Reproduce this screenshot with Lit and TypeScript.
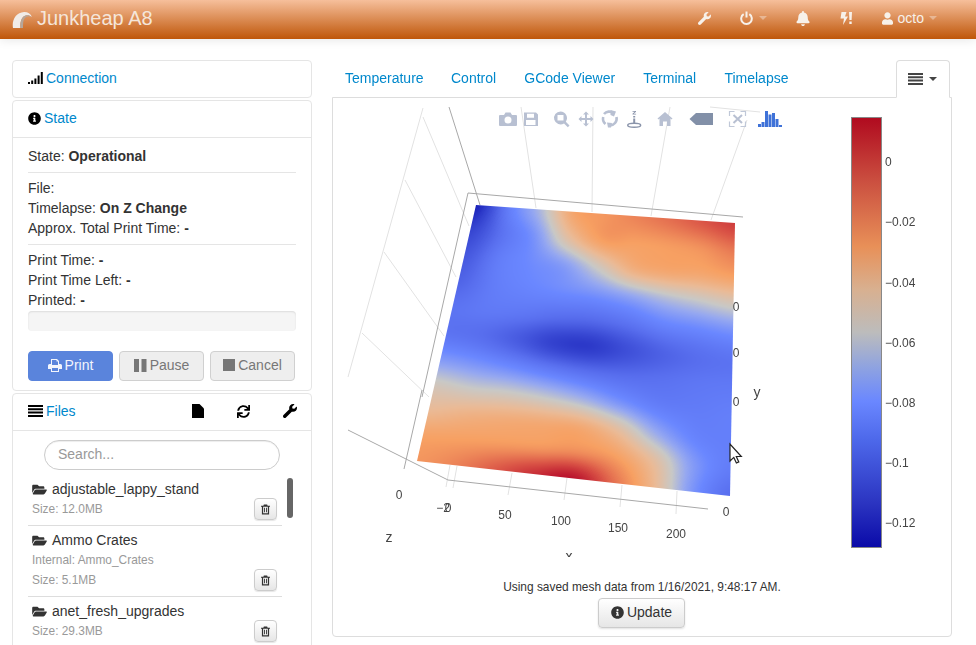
import { LitElement, html, css, svg } from "lit";
import { customElement } from "lit/decorators.js";

const WRENCH = "M507.73 109.1c-2.24-9.03-13.54-12.09-20.12-5.51l-74.36 74.36-67.88-11.31-11.31-67.88 74.36-74.36c6.62-6.62 3.43-17.9-5.66-20.16-47.38-11.74-99.55.91-136.58 37.93-39.64 39.64-50.55 97.1-34.05 147.2L18.74 402.76c-24.99 24.99-24.99 65.51 0 90.5 24.99 24.99 65.51 24.99 90.5 0l213.21-213.21c50.12 16.71 107.47 5.68 147.37-34.22 37.07-37.07 49.7-89.32 37.91-136.73z";
const INFO = "M256 8C119.043 8 8 119.083 8 256c0 136.997 111.043 248 248 248s248-111.003 248-248C504 119.083 392.957 8 256 8zm0 110c23.196 0 42 18.804 42 42s-18.804 42-42 42-42-18.804-42-42 18.804-42 42-42zm56 254c0 6.627-5.373 12-12 12h-88c-6.627 0-12-5.373-12-12v-24c0-6.627 5.373-12 12-12h12v-64h-12c-6.627 0-12-5.373-12-12v-24c0-6.627 5.373-12 12-12h64c6.627 0 12 5.373 12 12v100h12c6.627 0 12 5.373 12 12v24z";
const BELL = "M224 512c35.32 0 63.97-28.65 63.97-64H160.03c0 35.35 28.65 64 63.97 64zm215.39-149.71c-19.32-20.76-55.47-51.99-55.47-154.29 0-77.7-54.48-139.9-127.94-155.16V32c0-17.67-14.32-32-31.98-32s-31.98 14.33-31.98 32v20.84C118.56 68.1 64.08 130.3 64.08 208c0 102.3-36.15 133.53-55.47 154.29-6 6.45-8.66 14.16-8.61 21.71.11 16.4 12.98 32 32.1 32h383.8c19.12 0 32-15.6 32.1-32 .05-7.55-2.61-15.27-8.61-21.71z";
const USER = "M224 256c70.7 0 128-57.3 128-128S294.7 0 224 0 96 57.3 96 128s57.3 128 128 128zm89.6 32h-16.7c-22.2 10.2-46.9 16-72.9 16s-50.6-5.8-72.9-16h-16.7C60.2 288 0 348.2 0 422.4V464c0 26.5 21.5 48 48 48h352c26.5 0 48-21.5 48-48v-41.6c0-74.2-60.2-134.4-134.4-134.4z";
const SYNC = "M440.65 12.57l4 82.77A247.16 247.16 0 0 0 255.83 8C134.73 8 33.91 94.92 12.29 209.82A12 12 0 0 0 24.09 224h49.05a12 12 0 0 0 11.67-9.26 175.91 175.91 0 0 1 317-56.94l-101.46-4.86a12 12 0 0 0-12.57 12v47.41a12 12 0 0 0 12 12H500a12 12 0 0 0 12-12V12a12 12 0 0 0-12-12h-47.37a12 12 0 0 0-11.98 12.57zM255.83 432a175.61 175.61 0 0 1-146-77.8l101.8 4.87a12 12 0 0 0 12.57-12v-47.4a12 12 0 0 0-12-12H12a12 12 0 0 0-12 12V500a12 12 0 0 0 12 12h47.35a12 12 0 0 0 12-12.6l-4.15-82.57A247.17 247.17 0 0 0 255.83 504c121.11 0 221.93-86.92 243.55-201.82a12 12 0 0 0-11.8-14.18h-49.05a12 12 0 0 0-11.67 9.26A175.86 175.86 0 0 1 255.83 432z";
const FOLDER = "M572.694 292.093L500.27 416.248A63.997 63.997 0 0 1 444.989 448H45.025c-18.523 0-30.064-20.093-20.731-36.093l72.424-124.155A64 64 0 0 1 152 256h399.964c18.523 0 30.064 20.093 20.73 36.093zM152 224h328v-48c0-26.51-21.49-48-48-48H272l-64-64H48C21.49 64 0 85.49 0 112v278.046l69.077-118.418C86.214 242.25 117.989 224 152 224z";

const ic = (vb: string, d: string, w: number, h: number) =>
  html`<svg class="ic" viewBox=${vb} width=${w} height=${h} fill="currentColor"><path d=${d}></path></svg>`;

const wrench = (s = 13) => ic("0 0 512 512", WRENCH, s, s);
const info = (s = 13) => ic("0 0 512 512", INFO, s, s);
const listIcon = () => html`<svg class="ic" viewBox="0 0 15 12" width="15" height="12" fill="currentColor"><path d="M0 0h15v2H0zM0 3.3h15v2H0zM0 6.6h15v2H0zM0 9.9h15v2H0z"></path></svg>`;
const folder = () => ic("0 0 576 512", FOLDER, 15, 13);
const trash = () => html`<svg class="ic" viewBox="0 0 10 11" width="9" height="11" fill="currentColor"><path fill-rule="evenodd" d="M3.2 0h3.6l.6 1.4H10v1H9V11H1V2.400H0v-1h2.600zM2.400 2.400v7.300h5.200V2.400zM3.400 3.600h1v5h-1zM5.600 3.600h1v5h-1z"></path></svg>`;
const caret = () => html`<span class="caret"></span>`;

const KNOTS: number[][] = [
  [.03, .30, .46, .68, .72, .76, .80, .85, .90],
  [.12, .27, .38, .58, .70, .70, .71, .73, .78],
  [.18, .30, .35, .40, .52, .64, .67, .67, .69],
  [.22, .30, .33, .35, .37, .41, .46, .49, .52],
  [.27, .29, .28, .25, .24, .27, .32, .34, .36],
  [.27, .25, .19, .11, .09, .15, .21, .25, .27],
  [.38, .36, .33, .29, .26, .25, .26, .28, .29],
  [.52, .50, .50, .48, .44, .37, .31, .30, .31],
  [.60, .63, .65, .66, .66, .58, .43, .33, .31],
  [.69, .70, .71, .72, .74, .70, .58, .39, .30],
  [.72, .76, .84, .93, .99, .80, .62, .38, .25],
];

const SURFACE_STOPS: [number, number[]][] = [
  [0, [16, 20, 178]], [.1, [48, 62, 204]], [.25, [88, 110, 238]], [.34, [106, 135, 255]],
  [.42, [150, 168, 240]], [.5, [200, 200, 198]], [.6, [234, 186, 150]], [.7, [247, 160, 98]],
  [.85, [218, 84, 70]], [1, [184, 16, 44]],
];

function cr(a: number, b: number, c: number, d: number, t: number) {
  return .5 * (2 * b + (c - a) * t + (2 * a - 5 * b + 4 * c - d) * t * t + (3 * b - a - 3 * c + d) * t * t * t);
}

function field(u: number, v: number) {
  const R = KNOTS.length - 1, C = KNOTS[0].length - 1;
  const x = Math.min(Math.max(u, 0), 1) * C, y = Math.min(Math.max(v, 0), 1) * R;
  const i = Math.min(Math.floor(x), C - 1), j = Math.min(Math.floor(y), R - 1);
  const g = (r: number, c: number) => KNOTS[Math.min(Math.max(r, 0), R)][Math.min(Math.max(c, 0), C)];
  const row = (r: number) => cr(g(r, i - 1), g(r, i), g(r, i + 1), g(r, i + 2), x - i);
  return cr(row(j - 1), row(j), row(j + 1), row(j + 2), y - j);
}

function colour(t: number) {
  const s = SURFACE_STOPS;
  const x = Math.min(Math.max(t, 0), 1);
  for (let k = 1; k < s.length; k++) {
    if (x <= s[k][0]) {
      const f = (x - s[k - 1][0]) / (s[k][0] - s[k - 1][0]);
      return s[k][1].map((c, n) => s[k - 1][1][n] + (c - s[k - 1][1][n]) * f);
    }
  }
  return s[s.length - 1][1];
}

// Corners of the surface, in page pixels, minus the plot origin.
const OX = 333, OY = 98, PW = 618, PH = 459;
const TL = [476 - OX, 205 - OY], TR = [735 - OX, 223 - OY], BR = [730 - OX, 496 - OY], BL = [417 - OX, 461 - OY];

const GRID: number[][] = [
  [521, 107, 536, 208], [593, 107, 592, 212], [670, 107, 651, 216], [747, 120, 711, 220], [710, 107, 760, 112],
  [423, 108, 348, 377], [423, 117, 469, 226], [405, 180, 456, 277], [384, 252, 444, 336], [362, 333, 429, 397],
  [450, 465, 446, 487], [457, 466, 453, 488], [512, 473, 508, 495], [567, 478, 564, 500], [622, 485, 620, 507], [677, 491, 676, 514],
];
const AXES: number[][] = [
  [449, 107, 480, 205], [468, 193, 743, 217], [468, 193, 422, 397], [422, 390, 404, 469], [448, 480, 708, 509], [348, 430, 448, 480],
];
const LABELS: [number, number, string][] = [
  [399, 499, "0"], [443, 512, "−2"], [448, 512, "0"], [505, 519, "50"], [561, 525, "100"], [618, 532, "150"], [676, 538, "200"], [726, 516, "0"],
  [736, 311, "0"], [736, 357, "0"], [736, 406, "0"],
];
const TITLES: [number, number, string][] = [[757, 397, "y"], [389, 542, "z"], [569, 561, "x"]];
const BAR: [number, string][] = [
  [166, "0"], [226, "−0.02"], [287, "−0.04"], [347, "−0.06"], [407, "−0.08"], [467, "−0.1"], [527, "−0.12"],
];
const STOPS: [number, string][] = [
  [0, "#0a0aa8"], [.1, "#2a33c0"], [.25, "#4d68ea"], [.34, "#6a87ff"], [.42, "#8fa3e0"], [.5, "#bcbcbc"],
  [.6, "#d8b090"], [.7, "#e89058"], [.85, "#cb5040"], [1, "#b00a1f"],
];
const LOGO_BARS: number[][] = [[758, 124], [761.5, 122], [765, 111], [768.5, 114.5], [772, 113], [775.5, 119], [779, 125]];

@customElement("app-root")
export class AppRoot extends LitElement {
  static styles = css`
    :host { display: block; height: 645px; overflow: hidden; font: 14px/20px "Liberation Sans", Arial, sans-serif; color: #333; background: #fff; }
    * { box-sizing: border-box; }
    svg { display: block; }
    .ic { display: inline-block; flex: none; }
    a { color: #0088cc; text-decoration: none; }

    .nav { height: 39px; display: flex; align-items: center; padding: 0 39px 0 12px; position: relative; z-index: 2;
      background: linear-gradient(#f6bf9b, #bf5609); box-shadow: 0 1px 10px rgba(0,0,0,.1); color: #f7f1ea; }
    .brand { display: flex; align-items: center; font-size: 20px; color: #f5e6da; margin-top: -3px; }
    .brand svg { margin-right: 5px; margin-top: 3px; }
    .nav-right { margin-left: auto; display: flex; align-items: center; margin-top: -3px; }
    .ni { display: flex; align-items: center; }
    .ni-wrench { margin-right: 29px; }
    .ni-power { margin-right: 29px; }
    .ni-bell { margin-right: 30px; }
    .ni-bolt { margin-right: 30px; }
    .caret { display: inline-block; width: 0; height: 0; border: 4px solid transparent; border-top-color: currentColor; border-bottom: 0; }
    .nav .caret { opacity: .4; margin-left: 6px; }
    .octo { margin-left: 5px; }
    .ni-user .caret { margin-left: 5px; }

    .main { display: flex; padding: 21px 24px 0 12px; gap: 20px; }
    .left { width: 300px; flex: none; display: flex; flex-direction: column; gap: 2px; }
    .panel { border: 1px solid #e5e5e5; border-radius: 4px; background: #fff; }
    .head { height: 36px; padding: 7px 15px 9px; display: flex; align-items: center; gap: 3px; }
    .head .ic { color: #000; }
    .bordered { border-bottom: 1px solid #e5e5e5; height: 37px; }
    .state { padding: 8px 15px 8px; height: 252px; }
    .hr { height: 1px; background: #e5e5e5; margin: 6px 0 5px; }
    .progress { height: 20px; margin-top: 1px; border-radius: 4px; background: #f5f5f5; box-shadow: inset 0 1px 2px rgba(0,0,0,.1); }
    .btns { display: flex; gap: 6px; margin-top: 20px; }
    .btn { width: 85px; height: 30px; padding-bottom: 2px; display: flex; align-items: center; justify-content: center; gap: 3px; border-radius: 4px;
      border: 1px solid #d0d0d0; background: #eee; color: #777; }
    .btn.primary { background: #5a84dc; border-color: #5a84dc; color: #f2f5fc; }
    .files-head { justify-content: flex-start; }
    .tools { margin-left: auto; display: flex; align-items: center; gap: 33px; margin-right: -1px; }
    .files-body { position: relative; height: 300px; padding: 9px 15px 0; overflow: hidden; }
    .search { display: block; width: 236px; height: 30px; margin-left: 16px; border: 1px solid #ccc; border-radius: 15px; padding: 0 13px;
      line-height: 26px; color: #999; box-shadow: inset 0 1px 1px rgba(0,0,0,.075); }
    .list { margin-top: 5px; width: 254px; }
    .item { padding: 4px 5px 6px 4px; border-bottom: 1px solid #ddd; }
    .name { display: flex; align-items: center; gap: 5px; color: #333; }
    .name .ic { color: #333; }
    .meta { font-size: 11.9px; color: #999; }
    .row { display: flex; justify-content: space-between; align-items: center; }
    .del { width: 23px; height: 22px; margin: -1px 0; border: 1px solid #ccc; border-radius: 4px; background: linear-gradient(#fff, #e6e6e6);
      display: flex; align-items: center; justify-content: center; color: #333; box-shadow: 0 1px 1px rgba(0,0,0,.1); }
    .thumb { position: absolute; left: 274px; top: 47px; width: 6px; height: 40px; border-radius: 3px; background: #666; }

    .right { width: 620px; flex: none; }
    .tabs { display: flex; height: 38px; position: relative; z-index: 1; margin-bottom: -1px; }
    .tab { padding: 7px 12px 9px; border: 1px solid transparent; margin-right: 2.2px; height: 38px; line-height: 20px; }
    .tab:first-child { margin-right: 1.4px; }
    .tab-menu { margin-left: auto; margin-right: 2px; width: 54px; padding: 0 0 0 11px; display: flex; align-items: center; gap: 6px; background: #fff;
      border: 1px solid #ddd; border-bottom-color: #fff; border-radius: 4px 4px 0 0; color: #444; }
    .content { height: 540px; border: 1px solid #ddd; border-radius: 0 0 4px 4px; text-align: center; }
    .plot { position: relative; height: 459px; overflow: hidden; }
    .plot canvas, .plot > svg { position: absolute; left: 0; top: 0; }
    .note { margin-top: 20px; font-size: 11.9px; line-height: 20px; color: #333; }
    .update { display: inline-flex; width: 87px; height: 30px; margin: 1px 1px 0 0; padding-bottom: 2px; align-items: center; justify-content: center; gap: 3px;
      border: 1px solid #ccc; border-radius: 4px; background: linear-gradient(#fff, #e6e6e6); box-shadow: 0 1px 2px rgba(0,0,0,.12); color: #333; }
    .t { font: 12px "Liberation Sans", Arial, sans-serif; fill: #444; }
    .title { font: 14px "Liberation Sans", Arial, sans-serif; fill: #444; }
  `;

  firstUpdated() {
    const cv = this.renderRoot.querySelector("canvas") as HTMLCanvasElement;
    const off = document.createElement("canvas");
    off.width = PW; off.height = PH;
    const o = off.getContext("2d")!;
    const img = o.createImageData(PW, PH);
    const N = 1000;
    for (let a = -10; a <= N + 10; a++) {
      const v = a / N;
      for (let b = -10; b <= N + 10; b++) {
        const u = b / N;
        const x = Math.round((1 - v) * ((1 - u) * TL[0] + u * TR[0]) + v * ((1 - u) * BL[0] + u * BR[0]));
        const y = Math.round((1 - v) * ((1 - u) * TL[1] + u * TR[1]) + v * ((1 - u) * BL[1] + u * BR[1]));
        if (x < 0 || y < 0 || x >= PW || y >= PH) continue;
        const c = colour(field(u, v));
        const p = (y * PW + x) * 4;
        img.data[p] = c[0]; img.data[p + 1] = c[1]; img.data[p + 2] = c[2]; img.data[p + 3] = 255;
      }
    }
    o.putImageData(img, 0, 0);
    const ctx = cv.getContext("2d")!;
    ctx.beginPath();
    ctx.moveTo(TL[0], TL[1]); ctx.lineTo(TR[0], TR[1]); ctx.lineTo(BR[0], BR[1]); ctx.lineTo(BL[0], BL[1]);
    ctx.closePath();
    ctx.clip();
    ctx.drawImage(off, 0, 0);
  }

  private modebar() {
    const c = "#b8c0d2";
    return svg`
      <g fill=${c}>
        <path fill-rule="evenodd" d="M500 115h4l1.500-2.500h5l1.500 2.500h4a1 1 0 0 1 1 1v9a1 1 0 0 1-1 1h-16a1 1 0 0 1-1-1v-9a1 1 0 0 1 1-1zM508 116.500a3.500 3.500 0 1 0 0 7 3.500 3.500 0 0 0 0-7z"/>
        <path fill-rule="evenodd" d="M524 112.500h12l2 2v11.500h-14zM527 113.700v4h7v-4zM526 120v5h9.500v-5z"/>
        <path fill-rule="evenodd" d="M560.500 111.500a6.500 6.500 0 0 1 5.300 10.200l3.700 3.800-1.700 1.700-3.800-3.700a6.500 6.500 0 1 1-3.500-12zM557.500 115v5.500h6V115z"/>
        <path d="M586 111.500l3 3h-2v3.500h3.500v-2l3 3-3 3v-2H587v3.500h2l-3 3-3-3h2V120h-3.500v2l-3-3 3-3v2h3.500v-3.500h-2z"/>
        <path d="M665 112l7.500 6.500-.8 1-1.200-1v7.500h-3.500v-4.500h-4v4.500H659.500v-7.500l-1.200 1-.8-1z"/>
        <path fill="#8290a8" d="M713 113v12h-17l-6.500-6 6.500-6z"/>
      </g>
      <g fill="none" stroke=${c} stroke-width="2.600">
        <path d="M604 114a7 7 0 0 1 9.500-1"/>
        <path d="M616.500 117a7 7 0 0 1-7 8.500"/>
        <path d="M605.500 124a7 7 0 0 1-2.300-7"/>
      </g>
      <g fill=${c}>
        <path d="M610.500 110l5.500 1.500-2 5-3.500-1.500z"/>
        <path d="M608 127.500l-1-5 5 .5-1 4.500z"/>
      </g>
      <g fill="#8a94aa">
        <path d="M632.500 111h3.500v.8l-2.200 2h2.300v.8h-3.600v-.8l2.200-2h-2.200z"/>
        <path d="M633.200 116h2v1.500h-2zM633.200 118.500h2v5.500h-2z"/>
      </g>
      <ellipse cx="634.200" cy="125.200" rx="6.500" ry="2" fill="none" stroke="#8a94aa" stroke-width="1.400"></ellipse>
      <g fill="none" stroke="#c0c8d8" stroke-width="1.200">
        <path d="M729.500 116v-4.500h5M740.500 111.500h5v4.500M745.500 121.500v5h-5M734.500 126.500h-5v-5"/>
      </g>
      <g fill="none" stroke=${c} stroke-width="2">
        <path d="M733.500 115l8.500 8M742 115l-8.500 8"/>
      </g>
      <g fill="#3f72d8">
        ${LOGO_BARS.map(([x, y]) => svg`<rect x=${x} y=${y} width="3" height=${127 - y}></rect>`)}
      </g>`;
  }

  private plot() {
    return html`<svg width=${PW} height=${PH} viewBox="${OX} ${OY} ${PW} ${PH}">
      <defs><linearGradient id="cb" x1="0" y1="1" x2="0" y2="0">
        ${STOPS.map(([o, c]) => svg`<stop offset=${o} stop-color=${c}></stop>`)}
      </linearGradient></defs>
      ${GRID.map(l => svg`<line x1=${l[0]} y1=${l[1]} x2=${l[2]} y2=${l[3]} stroke="#e2e2e2" stroke-width="1"></line>`)}
      ${AXES.map(l => svg`<line x1=${l[0]} y1=${l[1]} x2=${l[2]} y2=${l[3]} stroke="#a8a8a8" stroke-width="1"></line>`)}
      ${this.modebar()}
      ${LABELS.map(([x, y, s]) => svg`<text class="t" x=${x} y=${y} text-anchor="middle">${s}</text>`)}
      ${TITLES.map(([x, y, s]) => svg`<text class="title" x=${x} y=${y} text-anchor="middle">${s}</text>`)}
      <rect x="851.500" y="117.500" width="30" height="430" fill="url(#cb)" stroke="#888"></rect>
      ${BAR.map(([y, s]) => svg`<text class="t" x="885" y=${y}>${s}</text>`)}
      <path d="M730 444v17l3.800-3.600 2.600 5.600 2.400-1.100-2.500-5.400h5z" fill="#fff" stroke="#222" stroke-width="1.200"></path>
    </svg>`;
  }

  private file(name: string, size: string, internal?: string) {
    return html`<div class="item">
      <div class="name">${folder()}<span>${name}</span></div>
      ${internal ? html`<div class="meta">Internal: ${internal}</div>` : ""}
      <div class="row meta"><span>Size: ${size}</span><span class="del">${trash()}</span></div>
    </div>`;
  }

  render() {
    return html`
      <div class="nav">
        <div class="brand">
          <svg width="20" height="18" viewBox="0 0 20 18"><path d="M1 17C-.5 9 4 1.500 12 1c3.500-.2 6.500 1.500 8 5-3-2.500-6.500-2.500-9 0-2.500 3-3 7-2.500 11z" fill="#f1ece8"></path><path d="M8.500 17C8 13 8.500 9 11 6c2.500-2.500 6-2.500 9 0-3-1.200-5.500-.8-7.500 1.500C11 9.500 11 13 11 17z" fill="#b5a69a"></path></svg>
          <span>Junkheap A8</span>
        </div>
        <div class="nav-right">
          <span class="ni ni-wrench">${wrench(13)}</span>
          <span class="ni ni-power"><svg class="ic" width="13" height="14" viewBox="0 0 13 14" fill="none" stroke="currentColor" stroke-width="2"><path d="M3.700 3.200a5.300 5.300 0 1 0 5.600 0"></path><path d="M6.500 0.500v6"></path></svg>${caret()}</span>
          <span class="ni ni-bell">${ic("0 0 448 512", BELL, 14, 15)}</span>
          <span class="ni ni-bolt"><svg class="ic" width="12" height="14" viewBox="0 0 12 14" fill="currentColor"><path d="M1.500 1h5L5 5.500h3L3 14l1-6.500H.5z"></path><path d="M9 1h3l-.4 8H9.400zM9.300 10.500h2.400V13H9.300z"></path></svg></span>
          <span class="ni ni-user">${ic("0 0 448 512", USER, 11, 13)}<span class="octo">octo</span>${caret()}</span>
        </div>
      </div>
      <div class="main">
        <div class="left">
          <div class="panel"><div class="head">
            <svg class="ic" width="15" height="12" viewBox="0 0 15 12" fill="currentColor"><path d="M0 10h2v2H0zM3.200 8.500h2V12h-2zM6.400 6.500h2V12h-2zM9.600 3.500h2V12h-2zM12.800 0h2v12h-2z"></path></svg>
            <a>Connection</a>
          </div></div>
          <div class="panel">
            <div class="head bordered">${info(13)}<a>State</a></div>
            <div class="state">
              <div>State: <strong>Operational</strong></div>
              <div class="hr"></div>
              <div>File:</div>
              <div>Timelapse: <strong>On Z Change</strong></div>
              <div>Approx. Total Print Time: <strong>-</strong></div>
              <div class="hr"></div>
              <div>Print Time: <strong>-</strong></div>
              <div>Print Time Left: <strong>-</strong></div>
              <div>Printed: <strong>-</strong></div>
              <div class="progress"></div>
              <div class="btns">
                <div class="btn primary"><svg class="ic" width="14" height="13" viewBox="0 0 14 13" fill="currentColor"><path fill-rule="evenodd" d="M3 0h6l2 2v3h1.500A1.500 1.500 0 0 1 14 6.500V10h-3v3H3v-3H0V6.500A1.500 1.500 0 0 1 1.500 5H3zM4 1v5h6V2.500H8.500V1zM4 9v3h6V9z"></path></svg>Print</div>
                <div class="btn"><svg class="ic" width="13" height="13" viewBox="0 0 13 13" fill="currentColor"><path d="M0 0h5v13H0zM7.500 0h5v13h-5z"></path></svg>Pause</div>
                <div class="btn"><svg class="ic" width="12" height="12" viewBox="0 0 12 12" fill="currentColor"><path d="M0 0h12v12H0z"></path></svg>Cancel</div>
              </div>
            </div>
          </div>
          <div class="panel">
            <div class="head bordered files-head">
              ${listIcon()}<a>Files</a>
              <span class="tools">
                <svg class="ic" width="12" height="14" viewBox="0 0 12 14" fill="currentColor"><path d="M0 0h7.500l4.500 4.500V14H0z"></path></svg>
                ${ic("0 0 512 512", SYNC, 13, 13)}
                ${wrench(14)}
              </span>
            </div>
            <div class="files-body">
              <div class="search">Search...</div>
              <div class="list">
                ${this.file("adjustable_lappy_stand", "12.0MB")}
                ${this.file("Ammo Crates", "5.1MB", "Ammo_Crates")}
                ${this.file("anet_fresh_upgrades", "29.3MB")}
              </div>
              <div class="thumb"></div>
            </div>
          </div>
        </div>
        <div class="right">
          <div class="tabs">
            <a class="tab">Temperature</a><a class="tab">Control</a><a class="tab">GCode Viewer</a><a class="tab">Terminal</a><a class="tab">Timelapse</a>
            <div class="tab-menu">${listIcon()}${caret()}</div>
          </div>
          <div class="content">
            <div class="plot">
              <canvas width=${PW} height=${PH}></canvas>
              ${this.plot()}
            </div>
            <div class="note">Using saved mesh data from 1/16/2021, 9:48:17 AM.</div>
            <div class="update">${info(13)}Update</div>
          </div>
        </div>
      </div>
    `;
  }
}
